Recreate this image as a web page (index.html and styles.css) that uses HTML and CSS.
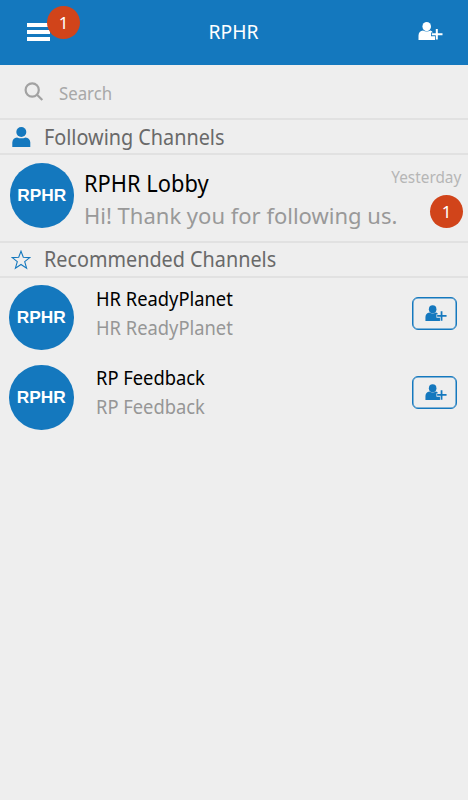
FILE: index.html
```html
<!DOCTYPE html>
<html lang="en">
<head>
<meta charset="utf-8">
<title>RPHR</title>
<link rel="stylesheet" href="styles.css">
</head>
<body>
<svg width="0" height="0" class="defs" aria-hidden="true">
  <symbol id="add-user" viewBox="0 0 25 19">
    <ellipse cx="8.7" cy="4.6" rx="4.3" ry="4.6"/>
    <path d="M0.5 18V13.5Q0.7 9 5 8.4Q8.7 10.4 12.4 8.4Q14.2 8.8 14.8 10.4H13V14.2H17V18Z"/>
    <path d="M13.8 11.2H17.8V7H19.8V11.2H24.5V13.2H19.8V17.6H17.8V13.2H13.8Z"/>
  </symbol>
</svg>
<header class="topbar">
  <button class="menu" aria-label="Menu">
    <span class="bars"><i></i><i></i><i></i></span>
    <span class="badge menu-badge">1</span>
  </button>
  <h1 class="title">RPHR</h1>
  <button class="add-top" aria-label="Add"><svg width="25" height="19"><use href="#add-user"/></svg></button>
</header>
<div class="search">
  <svg width="20" height="20" viewBox="0 0 20 20"><circle cx="8.2" cy="8" r="6.6"/><path d="M13 12.8L18.3 18"/></svg>
  <span class="search-label">Search</span>
</div>
<section>
  <div class="heading following">
    <svg width="19" height="20" viewBox="0 0 19 20"><circle cx="9.3" cy="5" r="5"/><path d="M.3 20V15.5Q.6 11 5 10.4Q9.3 12.2 13.5 10.4Q18 11 18.3 15.5V20Z"/></svg>
    <h2>Following Channels</h2>
  </div>
  <div class="lobby">
    <span class="avatar">RPHR</span>
    <div class="lobby-text">
      <div class="lobby-name">RPHR Lobby</div>
      <div class="message">Hi! Thank you for following us.</div>
    </div>
    <div class="meta">
      <span class="time">Yesterday</span>
      <span class="badge">1</span>
    </div>
  </div>
</section>
<section>
  <div class="heading recommended">
    <svg width="20" height="20" viewBox="0 0 20 20"><path d="M10 1.2L12.3 7.2L18.8 7.6L13.7 11.6L15.6 18.2L10 14.5L4.4 18.2L6.3 11.6L1.2 7.6L7.7 7.2Z"/></svg>
    <h2>Recommended Channels</h2>
  </div>
  <div class="channels">
    <div class="channel">
      <span class="avatar">RPHR</span>
      <div class="channel-text"><div>HR ReadyPlanet</div><div class="sub">HR ReadyPlanet</div></div>
      <button class="follow" aria-label="Follow"><svg width="22" height="17"><use href="#add-user"/></svg></button>
    </div>
    <div class="channel">
      <span class="avatar">RPHR</span>
      <div class="channel-text"><div>RP Feedback</div><div class="sub">RP Feedback</div></div>
      <button class="follow" aria-label="Follow"><svg width="22" height="17"><use href="#add-user"/></svg></button>
    </div>
  </div>
</section>
</body>
</html>
```
FILE: styles.css
```css
* { box-sizing: border-box; }
body {
  margin: 0;
  min-height: 800px;
  background: #eee;
  color: #000;
  font-family: "Noto Sans", "Open Sans", sans-serif;
}
h1, h2 { margin: 0; font-weight: 400; }
button { padding: 0; border: 0; background: none; font: inherit; color: inherit; }
svg { display: block; flex: none; }
.defs { position: absolute; }

.topbar {
  display: grid;
  grid-template-columns: 1fr auto 1fr;
  align-items: center;
  height: 65px;
  padding: 0 25px 0 27px;
  background: #1478be;
  color: #fff;
}
.menu { position: relative; justify-self: start; }
.bars { display: grid; gap: 3px; width: 23px; padding-bottom: 1px; }
.bars i { height: 4px; background: #fff; }
.menu-badge { position: absolute; left: 20px; top: -17px; }
.title { font-size: 20.5px; line-height: 30px; margin: 0 2px 3px 0; transform: scaleX(.94); }
.add-top { justify-self: end; }
.add-top svg { fill: #fff; margin-bottom: 2px; }

.badge {
  display: flex;
  align-items: center;
  justify-content: center;
  width: 33px;
  height: 33px;
  border-radius: 50%;
  background: #d1441a;
  color: #fff;
  font-size: 17px;
  line-height: 1;
}

.search {
  display: flex;
  align-items: center;
  gap: 15px;
  height: 55px;
  padding: 0 24px;
  border-bottom: 2px solid #e1e1e1;
  color: #a8a8a8;
}
.search svg { fill: none; stroke: #a2a2a2; stroke-width: 2.2; }
.search-label { font-size: 17.5px; line-height: 24px; padding-top: 3px; transform: scaleX(.96); transform-origin: left; }

.heading {
  display: flex;
  align-items: center;
  height: 35px;
  border-bottom: 2px solid #e1e1e1;
  color: #696969;
}
.heading h2 { font-size: 21px; line-height: 30px; transform: scaleX(.943); transform-origin: left; }
.following { padding-left: 12px; gap: 13px; }
.following svg { fill: #1478be; }
.recommended { padding-left: 11px; gap: 13px; }
.recommended h2 { margin-bottom: 2px; }
.recommended svg { fill: none; stroke: #1478be; stroke-width: 1.1; }

.avatar {
  display: flex;
  flex: none;
  align-items: center;
  justify-content: center;
  width: 64.5px;
  height: 64.5px;
  border-radius: 50%;
  background: #1478be;
  color: #fff;
  font: 700 17.3px "Liberation Sans", Arial, sans-serif;
}

.lobby {
  display: flex;
  height: 88px;
  padding: 8px 5px 0 9.5px;
  border-bottom: 2px solid #e1e1e1;
}
.lobby-text { flex: 1; min-width: 0; padding-left: 10px; white-space: nowrap; }
.lobby-name { font-size: 23px; line-height: 32px; padding-top: 4px; transform: scaleX(.95); transform-origin: left; }
.message { font-size: 22px; line-height: 33px; color: #999; }
.meta { display: flex; flex: none; flex-direction: column; align-items: flex-end; width: 66px; }
.meta .time { font-size: 16.5px; line-height: 24px; padding-top: 2px; margin-right: 2px; color: #b6b6b6; transform: scaleX(.93); transform-origin: right; }
.meta .badge { margin-top: 6px; }

.channels { padding: 7px 11px 0 9px; }
.channel { display: flex; height: 80px; }
.channel-text { flex: 1; margin-top: -1px; padding-left: 22px; font-size: 19.5px; line-height: 29px; transform: scaleX(.94); transform-origin: 22px 0; }
.sub { color: #969696; }
.follow {
  display: flex;
  align-items: center;
  justify-content: center;
  width: 45px;
  height: 33px;
  margin-top: 12px;
  padding-left: 3px;
  border: 1px solid #1478be;
  border-radius: 6px;
  box-shadow: inset 0 0 0 .5px #1478be;
}
.channel + .channel .follow { margin-top: 11px; }
.channel + .channel .channel-text { margin-top: -2px; }
.follow svg { fill: #1478be; }
```
